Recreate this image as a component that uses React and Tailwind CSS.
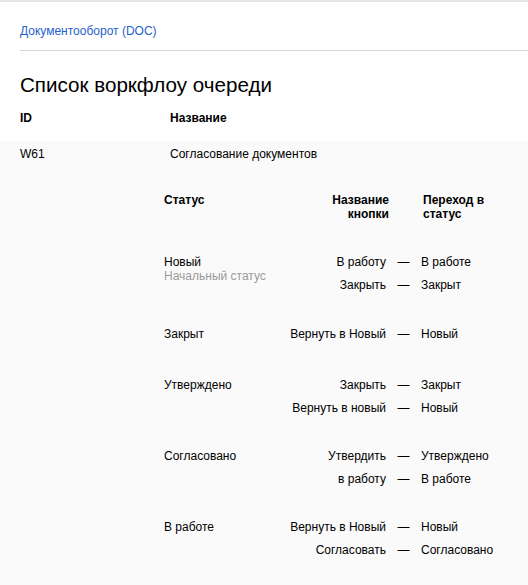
import React from "react";

const groups = [
  { status: "Новый", sub: "Начальный статус", rows: [["В работу", "В работе"], ["Закрыть", "Закрыт"]], pb: "pb-[26px]" },
  { status: "Закрыт", rows: [["Вернуть в Новый", "Новый"]], pb: "pb-[28px]" },
  { status: "Утверждено", rows: [["Закрыть", "Закрыт"], ["Вернуть в новый", "Новый"]], pb: "pb-[25px]" },
  { status: "Согласовано", rows: [["Утвердить", "Утверждено"], ["в работу", "В работе"]], pb: "pb-[25px]" },
  { status: "В работе", rows: [["Вернуть в Новый", "Новый"], ["Согласовать", "Согласовано"]], pb: "pb-[25px]" },
];

export default function App() {
  return (
    <div
      className="min-h-[585px] w-[528px] bg-white text-black text-[12px] leading-[14px] flex flex-col"
      style={{ fontFamily: '"Liberation Sans", Arial, sans-serif' }}
    >
      <div className="border-t-2 border-[#e6e6e6]" />
      <div className="pl-5 pt-[22px]">
        <a className="text-[#1f5fcc] block">Документооборот (DOC)</a>
        <div className="mt-[12px] border-t border-[#d4d4d4]" />
      </div>
      <h1 className="px-5 mt-[22px] text-[20.6px] leading-[24px] font-normal">Список воркфлоу очереди</h1>
      <div className="flex px-5 mt-[14px] pb-[16px] font-bold">
        <div className="w-[150px]">ID</div>
        <div>Название</div>
      </div>
      <div className="flex-1 bg-[#fafafa] pt-[6px]">
        <div className="flex px-5">
          <div className="w-[150px]">W61</div>
          <div>Согласование документов</div>
        </div>
        <div className="ml-[164px] mt-[32px]">
          <div className="flex font-bold">
            <div className="w-[225px] flex justify-between">
              <span>Статус</span>
              <span className="text-right">
                Название
                <br />
                кнопки
              </span>
            </div>
            <div className="ml-[34px]">
              Переход в
              <br />
              статус
            </div>
          </div>
          <div className="mt-[29px]">
            {groups.map((g, i) => (
              <div key={i} className={"flex " + g.pb}>
                <div className="w-[99px] pt-[5px] whitespace-nowrap">
                  <div>{g.status}</div>
                  {g.sub && <div className="text-[#9a9a9a]">{g.sub}</div>}
                </div>
                <div className="flex flex-col">
                  {g.rows.map(([btn, to], j) => (
                    <div key={j} className="flex h-[23px] items-center">
                      <div className="w-[123px] text-right whitespace-nowrap">{btn}</div>
                      <div className="w-[35px] text-center">—</div>
                      <div className="whitespace-nowrap">{to}</div>
                    </div>
                  ))}
                </div>
              </div>
            ))}
          </div>
        </div>
      </div>
    </div>
  );
}
